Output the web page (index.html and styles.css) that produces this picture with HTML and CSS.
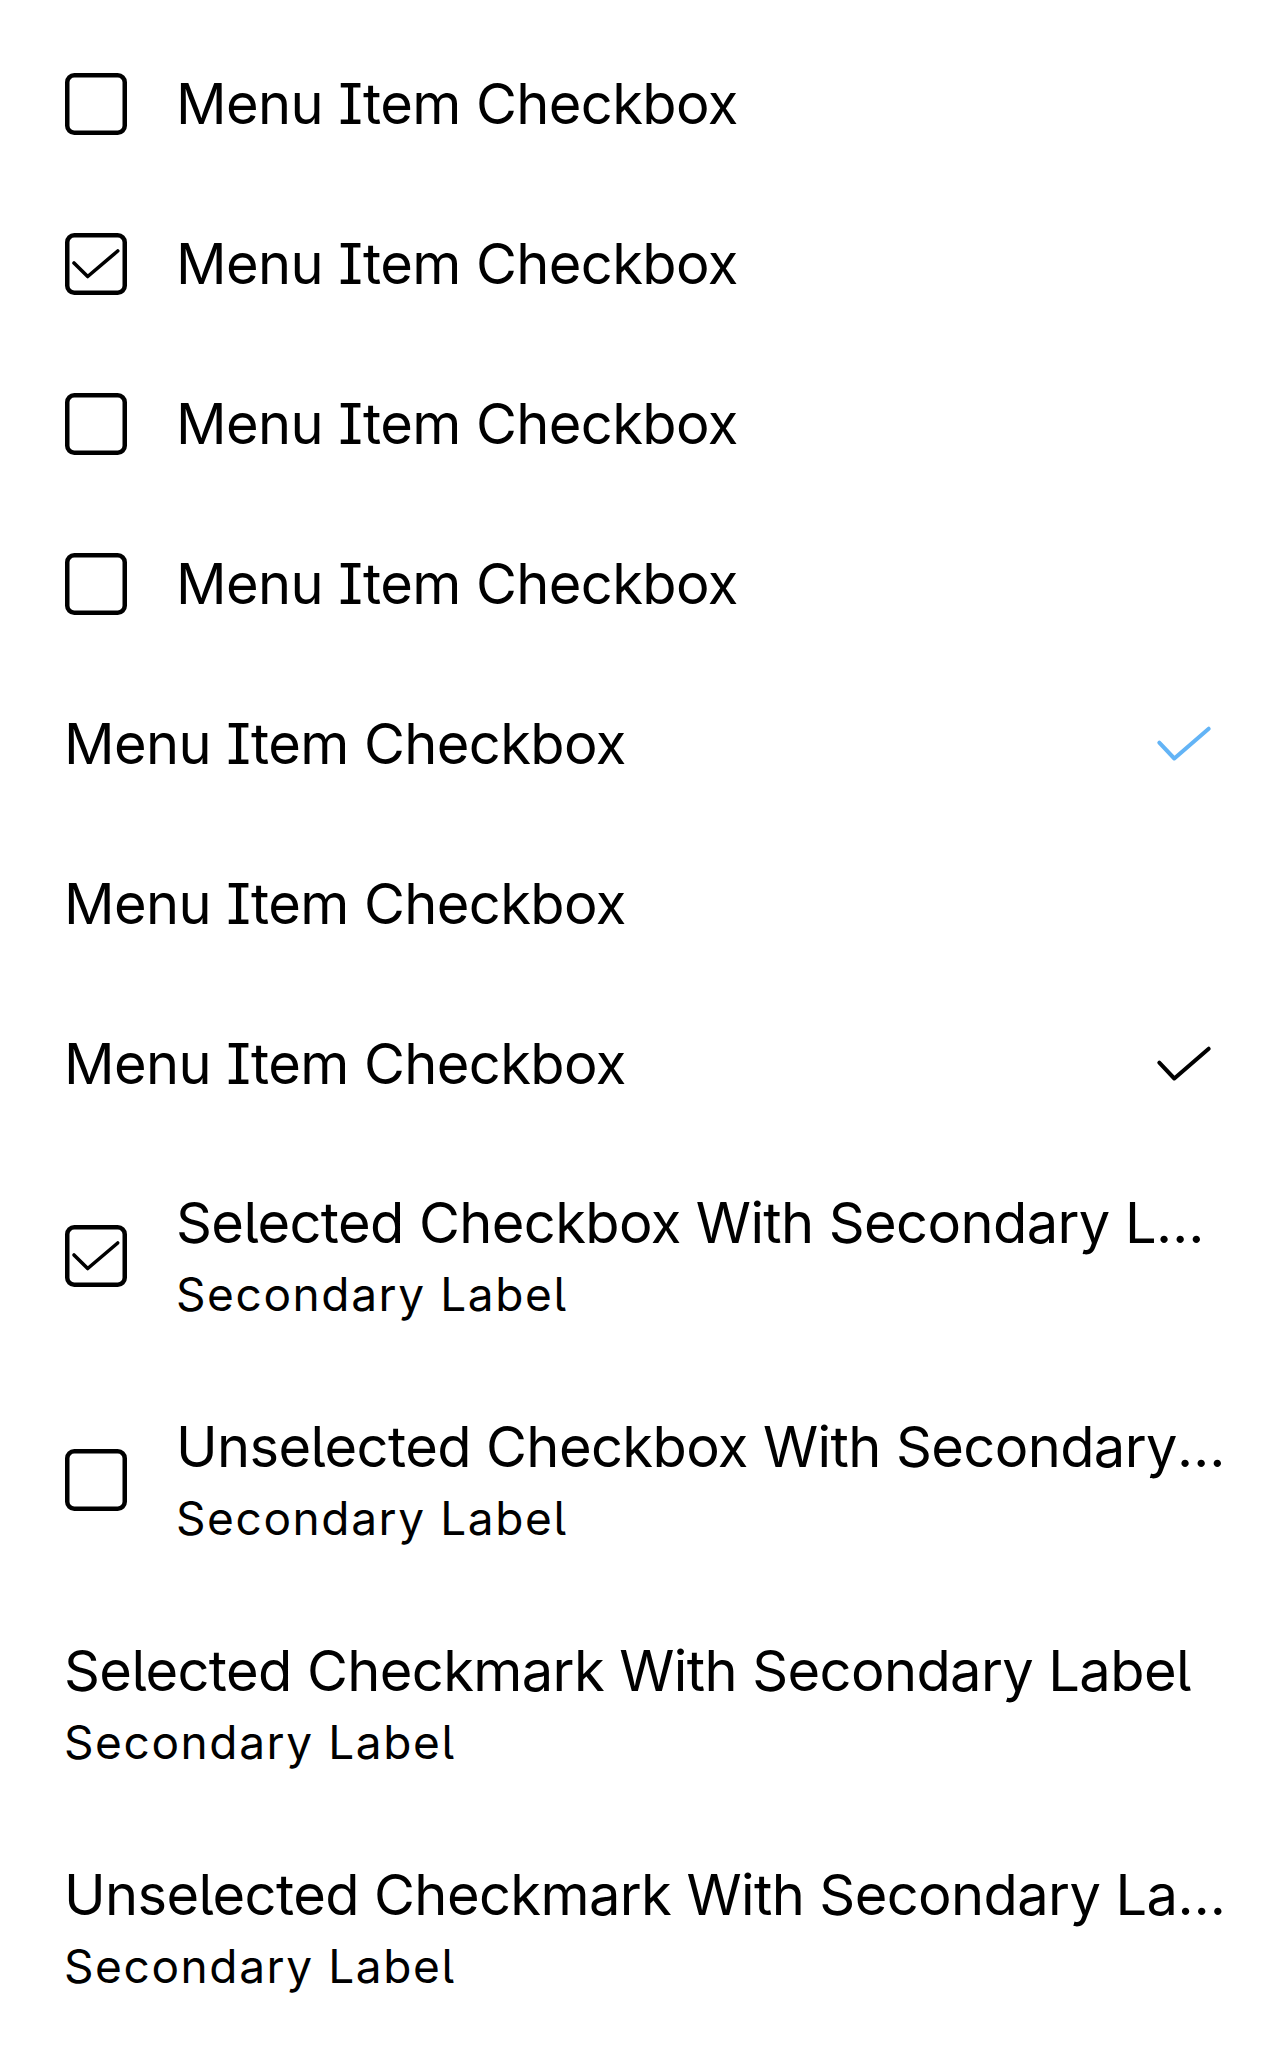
FILE: index.html
```html
<!DOCTYPE html>
<html lang="en">
<head>
<meta charset="utf-8">
<title>Menu Item Checkbox</title>
<link rel="stylesheet" href="styles.css">
</head>
<body>
<ul class="menu">
  <li class="item">
    <span class="box"><svg viewBox="0 0 62 62" width="62" height="62"><rect x="2.25" y="2.25" width="57.5" height="57.5" rx="7"/></svg></span>
    <span class="label">Menu Item Checkbox</span>
  </li>
  <li class="item">
    <span class="box"><svg viewBox="0 0 62 62" width="62" height="62"><rect x="2.25" y="2.25" width="57.5" height="57.5" rx="7"/><polyline class="tick" points="9,30 22.7,43.5 52.7,18"/></svg></span>
    <span class="label">Menu Item Checkbox</span>
  </li>
  <li class="item">
    <span class="box"><svg viewBox="0 0 62 62" width="62" height="62"><rect x="2.25" y="2.25" width="57.5" height="57.5" rx="7"/></svg></span>
    <span class="label">Menu Item Checkbox</span>
  </li>
  <li class="item">
    <span class="box"><svg viewBox="0 0 62 62" width="62" height="62"><rect x="2.25" y="2.25" width="57.5" height="57.5" rx="7"/></svg></span>
    <span class="label">Menu Item Checkbox</span>
  </li>
  <li class="item">
    <span class="label">Menu Item Checkbox</span>
    <svg class="mark mark-blue" viewBox="0 0 56 40" width="56" height="40"><polyline points="3.3,18.7 18.3,34.5 52.7,4.7"/></svg>
  </li>
  <li class="item">
    <span class="label">Menu Item Checkbox</span>
  </li>
  <li class="item">
    <span class="label">Menu Item Checkbox</span>
    <svg class="mark" viewBox="0 0 56 40" width="56" height="40"><polyline points="3.3,18.7 18.3,34.5 52.7,4.7"/></svg>
  </li>
  <li class="item item-two">
    <span class="box"><svg viewBox="0 0 62 62" width="62" height="62"><rect x="2.25" y="2.25" width="57.5" height="57.5" rx="7"/><polyline class="tick" points="9,30 22.7,43.5 52.7,18"/></svg></span>
    <span class="texts">
      <span class="label">Selected Checkbox With Secondary Label</span>
      <span class="sub">Secondary Label</span>
    </span>
  </li>
  <li class="item item-two">
    <span class="box"><svg viewBox="0 0 62 62" width="62" height="62"><rect x="2.25" y="2.25" width="57.5" height="57.5" rx="7"/></svg></span>
    <span class="texts">
      <span class="label">Unselected Checkbox With Secondary Label</span>
      <span class="sub">Secondary Label</span>
    </span>
  </li>
  <li class="item item-two">
    <span class="texts">
      <span class="label">Selected Checkmark With Secondary Label</span>
      <span class="sub">Secondary Label</span>
    </span>
  </li>
  <li class="item item-two">
    <span class="texts">
      <span class="label">Unselected Checkmark With Secondary Label</span>
      <span class="sub">Secondary Label</span>
    </span>
  </li>
</ul>
</body>
</html>
```

FILE: styles.css
```css
html, body {
  margin: 0;
  padding: 0;
  background: #ffffff;
}

body {
  font-family: "Inter", "Noto Sans", sans-serif;
  font-feature-settings: "cv05" 1, "cv08" 1;
  color: #000000;
}

.menu {
  list-style: none;
  margin: 0;
  padding: 24px 0;
}

.item {
  display: flex;
  align-items: center;
  height: 160px;
  padding: 0 52px 0 64px;
  box-sizing: border-box;
}

.item-two {
  height: 224px;
}

.box {
  flex: none;
  width: 62px;
  height: 62px;
  margin: 0 49px 0 1px;
  display: flex;
}

.box rect {
  fill: none;
  stroke: #000000;
  stroke-width: 4.5;
}

.box .tick {
  fill: none;
  stroke: #000000;
  stroke-width: 3.6;
  stroke-linecap: round;
  stroke-linejoin: round;
}

.label {
  display: block;
  font-size: 56px;
  line-height: 72px;
  letter-spacing: -0.6px;
  white-space: nowrap;
  overflow: hidden;
  text-overflow: ellipsis;
  min-width: 0;
}

.item > .label {
  flex: 1;
}

.texts {
  flex: 1;
  min-width: 0;
  display: flex;
  flex-direction: column;
  gap: 3px;
}

.sub {
  display: block;
  font-size: 46px;
  line-height: 64px;
  letter-spacing: 1.6px;
  white-space: nowrap;
}

.mark {
  flex: none;
  margin-right: 16px;
}

.mark polyline {
  fill: none;
  stroke: #000000;
  stroke-width: 4;
  stroke-linecap: round;
  stroke-linejoin: round;
}

.mark-blue polyline {
  stroke: #63b4f6;
}
```
